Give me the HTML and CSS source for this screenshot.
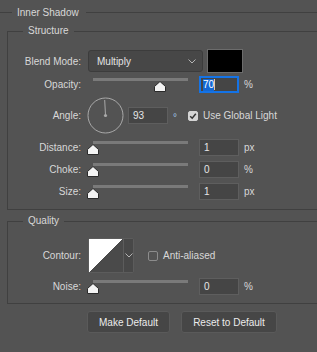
FILE: index.html
```html
<!DOCTYPE html>
<html lang="en">
<head>
    <meta charset="UTF-8">
    <title>Inner Shadow</title>
    <link rel="stylesheet" href="styles.css">
</head>
<body>
    <div class="panel">
        <div class="panel-title">Inner Shadow</div>

        <fieldset class="group group-structure">
            <legend>Structure</legend>
            <div class="row row-blend">
                <span class="label">Blend Mode:</span>
                <div class="select">
                    <span>Multiply</span>
                    <svg class="chevron" width="8" height="5" viewBox="0 0 8 5"><polyline points="0.5,0.5 4,4 7.5,0.5"/></svg>
                </div>
                <div class="swatch"></div>
            </div>
            <div class="row row-opacity">
                <span class="label">Opacity:</span>
                <div class="slider">
                    <svg class="thumb" style="left: 70%" width="12" height="11" viewBox="0 0 12 11"><polygon points="6,0.5 11.5,5.5 11.5,10.5 0.5,10.5 0.5,5.5"/></svg>
                </div>
                <div class="field field-focus"><span class="selected">70</span><span class="caret"></span></div>
                <span class="unit">%</span>
            </div>
            <div class="row row-angle">
                <span class="label">Angle:</span>
                <svg class="dial" width="37" height="37" viewBox="0 0 37 37">
                    <circle cx="18.5" cy="18.5" r="17.5"/>
                    <line x1="18.5" y1="18.5" x2="17.7" y2="3"/>
                    <circle class="dial-dot" cx="18.5" cy="18.5" r="1.6"/>
                </svg>
                <div class="field field-angle">93</div>
                <span class="degree">°</span>
                <span class="check checked">
                    <svg width="10" height="10" viewBox="0 0 10 10"><polyline points="2.2,5.2 4.2,7.2 7.8,2.8"/></svg>
                </span>
                <span class="check-label">Use Global Light</span>
            </div>
            <div class="row row-slider">
                <span class="label">Distance:</span>
                <div class="slider">
                    <svg class="thumb" style="left: 0%" width="12" height="11" viewBox="0 0 12 11"><polygon points="6,0.5 11.5,5.5 11.5,10.5 0.5,10.5 0.5,5.5"/></svg>
                </div>
                <div class="field">1</div>
                <span class="unit">px</span>
            </div>
            <div class="row row-slider">
                <span class="label">Choke:</span>
                <div class="slider">
                    <svg class="thumb" style="left: 0%" width="12" height="11" viewBox="0 0 12 11"><polygon points="6,0.5 11.5,5.5 11.5,10.5 0.5,10.5 0.5,5.5"/></svg>
                </div>
                <div class="field">0</div>
                <span class="unit">%</span>
            </div>
            <div class="row row-slider">
                <span class="label">Size:</span>
                <div class="slider">
                    <svg class="thumb" style="left: 0%" width="12" height="11" viewBox="0 0 12 11"><polygon points="6,0.5 11.5,5.5 11.5,10.5 0.5,10.5 0.5,5.5"/></svg>
                </div>
                <div class="field">1</div>
                <span class="unit">px</span>
            </div>
        </fieldset>

        <fieldset class="group group-quality">
            <legend>Quality</legend>
            <div class="row row-contour">
                <span class="label">Contour:</span>
                <div class="contour">
                    <div class="contour-preview"></div>
                    <div class="contour-arrow">
                        <svg class="chevron" width="8" height="5" viewBox="0 0 8 5"><polyline points="0.5,0.5 4,4 7.5,0.5"/></svg>
                    </div>
                </div>
                <span class="check"></span>
                <span class="check-label">Anti-aliased</span>
            </div>
            <div class="row row-noise">
                <span class="label">Noise:</span>
                <div class="slider">
                    <svg class="thumb" style="left: 0%" width="12" height="11" viewBox="0 0 12 11"><polygon points="6,0.5 11.5,5.5 11.5,10.5 0.5,10.5 0.5,5.5"/></svg>
                </div>
                <div class="field">0</div>
                <span class="unit">%</span>
            </div>
        </fieldset>

        <div class="buttons">
            <button class="btn btn-make">Make Default</button>
            <button class="btn btn-reset">Reset to Default</button>
        </div>
    </div>
</body>
</html>
```

FILE: styles.css
```css
body {
    margin: 0;
    padding: 0;
    width: 317px;
    height: 352px;
    overflow: hidden;
    background-color: #535353;
    color: #d8d8d8;
    font-family: 'Liberation Sans', Arial, sans-serif;
    font-size: 10px;
}
.panel-title {
    display: flex;
    align-items: center;
    height: 24px;
}
.panel-title::before,
.panel-title::after {
    content: '';
    height: 1px;
    background-color: #404040;
}
.panel-title::before {
    width: 12px;
    margin-right: 5px;
}
.panel-title::after {
    flex-grow: 1;
    margin-left: 7px;
}
/* the panel is cut at the window edge, so the boxes have no right side */
.group {
    margin: 0 0 0 7px;
    padding: 0;
    width: 310px;
    min-width: 0;
    border: 1px solid #404040;
    border-right: none;
    box-sizing: border-box;
}
.group legend {
    margin-left: 15px;
    padding: 0 5px;
    line-height: 14px;
}
.group-structure {
    padding-bottom: 9px;
}
.group-quality {
    margin-top: 4px;
    padding-bottom: 8px;
}
.row {
    display: flex;
    align-items: center;
    height: 17px;
}
.label {
    width: 73px;
    margin-right: 7px;
    text-align: right;
    flex-shrink: 0;
}
.row-blend {
    height: 24px;
    margin-top: 11px;
}
.row-opacity {
    margin-top: 3px;
}
.row-angle {
    height: 37px;
    margin-top: 4px;
}
.row-slider {
    margin-top: 5px;
}
.row-contour {
    height: 35px;
    margin-top: 10px;
}
.row-noise {
    margin-top: 5px;
}
.select {
    display: flex;
    align-items: center;
    justify-content: space-between;
    width: 115px;
    height: 22px;
    padding: 0 6px 0 8px;
    box-sizing: border-box;
    background-color: #474747;
    border: 1px solid #3c3c3c;
    border-radius: 3px;
    color: #e4e4e4;
}
.chevron polyline {
    fill: none;
    stroke: #b4b4b4;
    stroke-width: 1;
}
.swatch {
    width: 36px;
    height: 24px;
    margin-left: 4px;
    box-sizing: border-box;
    background-color: #000;
    border: 1px solid #6c6c6c;
}
.slider {
    position: relative;
    width: 95px;
    height: 17px;
    margin-left: 5px;
    margin-right: 11px;
    flex-shrink: 0;
}
.slider::before {
    content: '';
    position: absolute;
    left: 0;
    right: 0;
    top: 2px;
    height: 3px;
    background-color: #7a7a7a;
}
.thumb {
    position: absolute;
    top: 5px;
    margin-left: -6px;
}
.thumb polygon {
    fill: #f4f4f4;
    stroke: #2b2b2b;
    stroke-width: 1;
    stroke-linejoin: round;
}
.field {
    display: flex;
    align-items: center;
    width: 40px;
    height: 17px;
    padding-left: 4px;
    box-sizing: border-box;
    background-color: #454545;
    border: 1px solid #5e5e5e;
    color: #e6e6e6;
    flex-shrink: 0;
}
.field-focus {
    border: 2px solid #1473e6;
    padding-left: 2px;
}
.selected {
    background-color: #1467d2;
    color: #fff;
    line-height: 12px;
}
.caret {
    width: 1px;
    height: 11px;
    background-color: #e8c9a0;
}
.unit {
    margin-left: 5px;
}
.dial {
    margin-left: -1px;
    flex-shrink: 0;
}
.dial circle,
.dial line {
    fill: none;
    stroke: #a9a9a9;
    stroke-width: 1;
}
.dial .dial-dot {
    fill: #a9a9a9;
    stroke: none;
}
.field-angle {
    margin-left: 4px;
}
.degree {
    margin-left: 5px;
    padding-top: 3px;
    color: #9fc3e6;
}
.check {
    width: 10px;
    height: 10px;
    margin-left: 11px;
    box-sizing: border-box;
    border: 1px solid #8c8c8c;
    border-radius: 2px;
    flex-shrink: 0;
}
.check.checked {
    background-color: #d4d4d4;
    border-color: #d4d4d4;
    display: flex;
}
.check.checked svg {
    margin: -1px;
}
.check polyline {
    fill: none;
    stroke: #333;
    stroke-width: 1.5;
}
.check-label {
    margin-left: 5px;
    white-space: nowrap;
}
.contour {
    display: flex;
    width: 46px;
    height: 35px;
    box-sizing: border-box;
    border: 1px solid #5c5c5c;
    border-radius: 2px;
    flex-shrink: 0;
}
.contour-preview {
    width: 34px;
    background: linear-gradient(to bottom right, #ffffff 50%, #4a4a4a 50%);
}
.contour-arrow {
    flex-grow: 1;
    display: flex;
    align-items: center;
    justify-content: center;
    background-color: #484848;
    border-left: 1px solid #5c5c5c;
}
.row-contour .check {
    margin-left: 14px;
}
.buttons {
    display: flex;
    gap: 11px;
    margin-top: 7px;
    padding-left: 87px;
}
.btn {
    height: 22px;
    padding: 0;
    background-color: #464646;
    border: 1px solid #5a5a5a;
    border-radius: 3px;
    color: #ececec;
    font-family: 'Liberation Sans', Arial, sans-serif;
    font-size: 10px;
}
.btn-make {
    width: 83px;
}
.btn-reset {
    width: 96px;
}
```
